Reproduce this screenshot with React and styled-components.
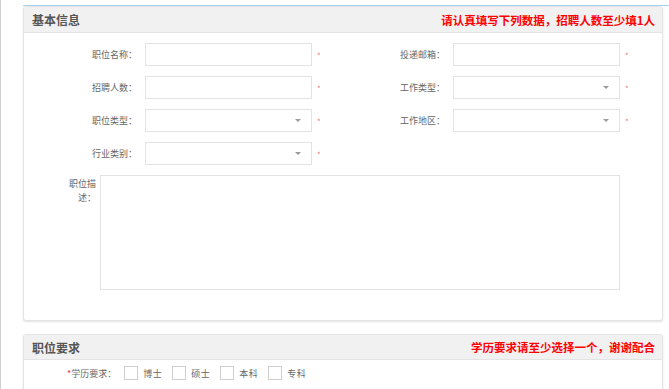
import React from "react";
import styled, { createGlobalStyle } from "styled-components";

const GlobalStyle = createGlobalStyle`
  html, body { margin: 0; padding: 0; background: #fff; }
  body { font-family: "Noto Sans CJK SC", "Noto Sans", sans-serif; }
  * { box-sizing: border-box; }
`;

const Page = styled.div`
  min-height: 389px;
  border-left: 1px solid #cfcfcf;
  padding: 5px 0 0 22px;
  overflow: hidden;
`;

const TopRule = styled.div`
  height: 1px;
  background: #a3d3f2;
`;

const Panel = styled.section`
  margin: ${(p) => p.$top || 0}px 6px 0 0;
  border: 1px solid #e4e4e4;
  border-radius: 3px;
  background: #fff;
  box-shadow: 0 1px 2px rgba(0, 0, 0, 0.12);
`;

const PanelHeader = styled.header`
  display: flex;
  justify-content: space-between;
  align-items: center;
  height: ${(p) => p.$h}px;
  padding: 0 7px 0 8px;
  background: #f1f1f1;
  border-bottom: 1px solid #e3e3e3;
`;

const Title = styled.h2`
  margin: 0;
  font-size: 12px;
  font-weight: bold;
  color: #555;
`;

const Notice = styled.span`
  font-size: 11.5px;
  font-weight: bold;
  color: #f00;
`;

const Body = styled.div`
  padding: ${(p) => p.$pad};
`;

const FormRow = styled.div`
  display: flex;
  align-items: center;
  height: 23px;
  margin-bottom: 10px;
`;

const Field = styled.div`
  display: flex;
  align-items: center;
  width: 308px;
`;

const Label = styled.label`
  width: 113px;
  text-align: right;
  font-size: 9px;
  color: #666;
  white-space: nowrap;
`;

const Input = styled.div`
  position: relative;
  margin-left: 8px;
  width: 167px;
  height: 23px;
  border: 1px solid #e3e3e3;
  background: #fff;
`;

const Arrow = styled.span`
  position: absolute;
  right: 10px;
  top: 9px;
  width: 0;
  height: 0;
  border-left: 3.5px solid transparent;
  border-right: 3.5px solid transparent;
  border-top: 3.5px solid #9a9a9a;
`;

const Star = styled.span`
  margin-left: 5px;
  font-size: 8px;
  color: #e88080;
  line-height: 1;
  padding-top: 3px;
`;

const DescRow = styled.div`
  display: flex;
  align-items: flex-start;
  padding-left: 42px;
`;

const DescLabel = styled.label`
  width: 30px;
  margin-right: 4px;
  padding-top: 2px;
  text-align: right;
  font-size: 9px;
  line-height: 14px;
  color: #666;
`;

const TextArea = styled.div`
  width: 520px;
  height: 115px;
  border: 1px solid #e3e3e3;
`;

const CheckRow = styled.div`
  display: flex;
  align-items: center;
  height: 14px;
  padding-left: 43px;
`;

const CheckLabel = styled.span`
  font-size: 9px;
  color: #666;
  margin-right: 8px;
  & > i {
    font-style: normal;
    color: #e53935;
  }
`;

const CheckItem = styled.label`
  display: flex;
  align-items: center;
  margin-right: 10px;
  font-size: 9px;
  color: #666;
  letter-spacing: 0.5px;
`;

const Box = styled.span`
  width: 14px;
  height: 14px;
  border: 1px solid #cfcfcf;
  margin-right: 5px;
  background: #fff;
`;

function FormField({ label, select }) {
  return (
    <Field>
      <Label>{label}</Label>
      <Input>{select && <Arrow />}</Input>
      <Star>*</Star>
    </Field>
  );
}

const rows = [
  [{ label: "职位名称：" }, { label: "投递邮箱：" }],
  [{ label: "招聘人数：" }, { label: "工作类型：", select: true }],
  [{ label: "职位类型：", select: true }, { label: "工作地区：", select: true }],
  [{ label: "行业类别：", select: true }],
];

export default function App() {
  return (
    <>
      <GlobalStyle />
      <Page>
        <TopRule />
        <Panel>
          <PanelHeader $h={26}>
            <Title>基本信息</Title>
            <Notice>请认真填写下列数据，招聘人数至少填1人</Notice>
          </PanelHeader>
          <Body $pad="10px 0 30px 0">
            {rows.map((r, i) => (
              <FormRow key={i}>
                {r.map((f) => (
                  <FormField key={f.label} {...f} />
                ))}
              </FormRow>
            ))}
            <DescRow>
              <DescLabel>职位描述：</DescLabel>
              <TextArea />
            </DescRow>
          </Body>
        </Panel>
        <Panel $top={13}>
          <PanelHeader $h={25}>
            <Title>职位要求</Title>
            <Notice>学历要求请至少选择一个，谢谢配合</Notice>
          </PanelHeader>
          <Body $pad="6px 0 12px 0">
            <CheckRow>
              <CheckLabel>
                <i>*</i>学历要求：
              </CheckLabel>
              {["博士", "硕士", "本科", "专科"].map((t) => (
                <CheckItem key={t}>
                  <Box />
                  {t}
                </CheckItem>
              ))}
            </CheckRow>
          </Body>
        </Panel>
      </Page>
    </>
  );
}
